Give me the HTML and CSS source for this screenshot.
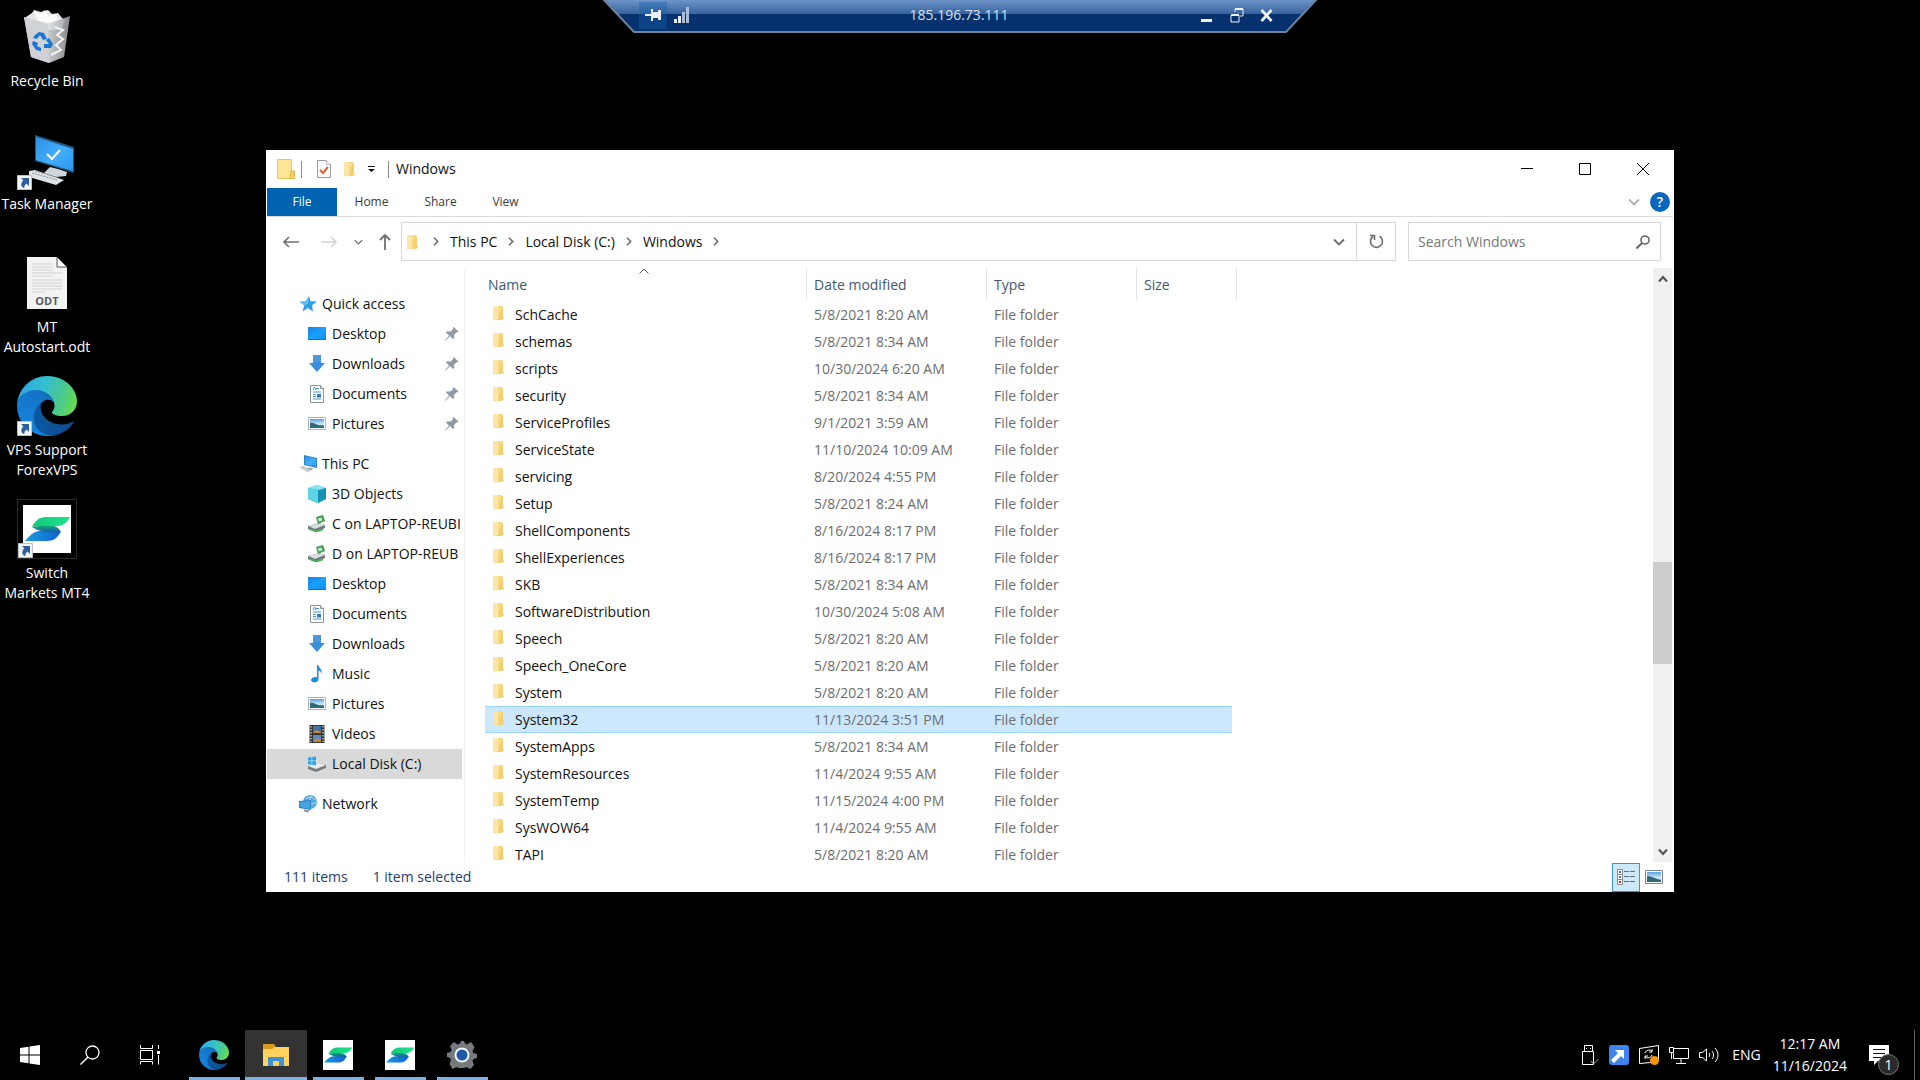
FILE: index.html
```html
<!DOCTYPE html>
<html lang="en">
<head>
<meta charset="utf-8">
<meta name="viewport" content="width=device-width, initial-scale=1">
<title>Remote desktop - 185.196.73.111</title>
<link rel="stylesheet" href="styles.css">
</head>
<body>
<svg class="defs" aria-hidden="true">
  <defs>
    <linearGradient id="gFolder" x1="0" y1="0" x2="1" y2="1"><stop offset="0" stop-color="#fbe297"/><stop offset="1" stop-color="#f3c85c"/></linearGradient>
    <linearGradient id="gScreen" x1="0" y1="0" x2="1" y2="1"><stop offset="0" stop-color="#2a8fe4"/><stop offset=".55" stop-color="#42b0fb"/><stop offset="1" stop-color="#2a93ea"/></linearGradient>
    <linearGradient id="gDesk" x1="0" y1="0" x2="1" y2="1"><stop offset="0" stop-color="#0f83e6"/><stop offset=".5" stop-color="#1ba0ff"/><stop offset="1" stop-color="#0c8cf0"/></linearGradient>
    <linearGradient id="gEdgeA" x1="63" y1="177" x2="241" y2="177" gradientUnits="userSpaceOnUse"><stop offset="0" stop-color="#0c59a4"/><stop offset="1" stop-color="#114a8b"/></linearGradient>
    <linearGradient id="gEdgeB" x1="150" y1="90" x2="45" y2="220" gradientUnits="userSpaceOnUse"><stop offset="0" stop-color="#1470bd"/><stop offset=".4" stop-color="#1478cc"/><stop offset="1" stop-color="#1583dc"/></linearGradient>
    <linearGradient id="gEdgeC" x1="10" y1="60" x2="240" y2="140" gradientUnits="userSpaceOnUse"><stop offset="0" stop-color="#2fa9e4"/><stop offset=".4" stop-color="#34bfd0"/><stop offset=".75" stop-color="#4cc98a"/><stop offset="1" stop-color="#66db50"/></linearGradient>
    <linearGradient id="gSwA" x1="0" y1="0" x2="1" y2="0"><stop offset="0" stop-color="#10c878"/><stop offset="1" stop-color="#1de58c"/></linearGradient>
    <linearGradient id="gSwB" x1="0" y1="0" x2="1" y2="0"><stop offset="0" stop-color="#1c9ae0"/><stop offset="1" stop-color="#0f62cf"/></linearGradient>
    <linearGradient id="gSwC" x1="0" y1="0" x2="0" y2="1"><stop offset="0" stop-color="#10a37c"/><stop offset="1" stop-color="#125fae"/></linearGradient>
    <linearGradient id="gPic" x1="0" y1="0" x2="0" y2="1"><stop offset="0" stop-color="#5b9fe0"/><stop offset=".55" stop-color="#cfe7f5"/><stop offset="1" stop-color="#8fc3dc"/></linearGradient>
    <linearGradient id="gBin" x1="0" y1="0" x2="1" y2="0"><stop offset="0" stop-color="#c9ccd0"/><stop offset=".5" stop-color="#e2e4e6"/><stop offset="1" stop-color="#94989d"/></linearGradient>
  </defs>
  <symbol id="folder" viewBox="0 0 11 16"><path d="M0 1h8l2 1v9l1 3-3 1H0z" fill="#f3cf74"/><path d="M0 1h5.500v12.500L3 16 0 14z" fill="#fbe6a6"/><path d="M5.500 1.500 9 2v9H5.500z" fill="url(#gFolder)"/></symbol>
  <symbol id="chev-r" viewBox="0 0 6 9"><path d="M1 .8 4.700 4.500 1 8.200" fill="none" stroke="#6d6d6d" stroke-width="1.600"/></symbol>
  <symbol id="chev-d" viewBox="0 0 12 8"><path d="M1 1.500 6 6.500 11 1.500" fill="none" stroke="currentColor" stroke-width="1.800"/></symbol>
  <symbol id="star" viewBox="0 0 18 18"><path d="m10 1 1.500 5.200 6.500.3-5 3.800 1 6.200L8.800 13 3.500 16.500l1.800-6.200L.5 6.800l6.200-.6z" fill="#2f9ee8"/><path d="M10 1 6.700 6.200.5 6.800l4.800 3.500L9 9z" fill="#5fc0f6"/></symbol>
  <symbol id="desk" viewBox="0 0 18 18"><path d="M0 2h18v13H0z" fill="url(#gDesk)"/><path d="M0 14h18v1H0z" fill="#1672c4"/></symbol>
  <symbol id="down" viewBox="0 0 18 18"><path d="M5 0h8v8h4L9 17 1 8h4z" fill="#3a8fdc"/><path d="M5 0h8v7H5z" fill="#4c97da"/></symbol>
  <symbol id="doc" viewBox="0 0 18 18"><path d="M2.500.5h10l3 3v14h-13z" fill="#fff" stroke="#8a949c"/><path d="M12.500.5v3h3" fill="#dfe4e8" stroke="#8a949c"/><path d="M5 5 6.500 2 8 5M8 3.500h3M5 7h8M5 9.500h3M5 11.500h3M5 14h8" fill="none" stroke="#4796d0"/><path d="M9 9h4v3.500H9z" fill="#3a77b0"/></symbol>
  <symbol id="pic" viewBox="0 0 18 18"><path d="M.5 2.500h17v12H.5z" fill="#fff" stroke="#a9b4bd"/><path d="M2 4h14v9H2z" fill="url(#gPic)"/><path d="M2 8c3-1 5 1 8 2l6 .5V13H2z" fill="#2f6a7d"/></symbol>
  <symbol id="pc" viewBox="0 0 18 18"><path d="m5 0 13 3v10L5 10z" fill="#2b7fc4"/><path d="m5.800 1 11.400 2.700v8.200L5.800 9.300z" fill="url(#gScreen)"/><path d="m0 12.500 4-1.500 9 4-4 2z" fill="#c3c9ce"/><path d="m9 12.500 5 .8-1 1.700-4-1z" fill="#9aa2a9"/></symbol>
  <symbol id="cube" viewBox="0 0 18 18"><path d="m0 3 9-3 9 3v11l-9 4-9-4z" fill="#32b9d6"/><path d="m0 3 9-3 9 3-7 2z" fill="#8ce4f2"/><path d="m0 3 10 2.500V18L0 14z" fill="#5fd3e7"/><path d="m10 5.500 8-2.500v11l-8 4z" fill="#1593b3"/></symbol>
  <symbol id="netdrive" viewBox="0 0 18 18"><path d="m0 11 11-3 6 2v3l-10 4-7-3z" fill="#70777a"/><path d="m0 11 11-3 6 2-10 4z" fill="#d7dbdd"/><path d="m8 2 7-2 2 6-7 3z" fill="#3d9a55"/><path d="m9.500 3.500 4-1 1 3-3.500 1z" fill="#c6ebcd"/><path d="m1 14 8 2.500 6-2" fill="none" stroke="#44b354" stroke-width="1.500"/></symbol>
  <symbol id="music" viewBox="0 0 18 18"><path d="M9 0h1.500c0 3 4 4 3.500 9-1-3-2.500-3.500-3.500-3.500V14c0 2-2 3.500-4 3.500S3 16.500 3 15s2-3 4-3c1 0 1.500 0 2 .3z" fill="#1e8ce0"/></symbol>
  <symbol id="video" viewBox="0 0 18 18"><path d="M1.500 0h15v18h-15z" fill="#343434"/><path d="M5 1h8v7H5z" fill="#4573a8"/><path d="M5 10h8v7H5z" fill="#568bc5"/><path d="m5 8 3-3 5 2v1zM5 17l4-4 4 2v2z" fill="#c88b34"/><path d="M3 1v16M15 1v16" stroke="#fff" stroke-dasharray="1.500 1.500"/></symbol>
  <symbol id="disk" viewBox="0 0 18 18"><path d="m0 11 10-3 8 2v3l-10 4-8-3z" fill="#777d82"/><path d="m0 11 10-3 8 2-10 4z" fill="#e8eaec"/><path d="M0 2.500 3.500 2v3.500H0zM4.200 2 8 1.500v4H4.200zM0 6.200h3.500v3.500L0 9zM4.200 6.200H8v4l-3.800-.5z" fill="#1fa8ee"/></symbol>
  <symbol id="net" viewBox="0 0 18 18"><circle cx="11" cy="7" r="7" fill="#5aa9da"/><path d="M7 4c3-3 7-2 9 1M7 9c4 1 8 0 10-2M12 1c-2 4-2 8 0 12" fill="none" stroke="#b8e1f5"/><path d="m0 6 12-1v10L0 13z" fill="#2b7fc4"/><path d="m1 7 10-1v8L1 12z" fill="#45a3e4"/><path d="m5 14.500 6 1-2 2-4-1z" fill="#8b959d"/></symbol>
  <symbol id="pin" viewBox="0 0 14 14"><path d="m8.500 0 5 4.500-1 1-1-.3L9 8l.3 3-1.300 1-3-3L.8 13.500 0 14l.5-1.200L4 8.500l-3-3 1-1.200 3.500.3L8.200 2 7.700.8z" fill="#8f9aa5"/></symbol>
  <symbol id="edge" viewBox="0 0 256 256"><path d="M235.680 195.460a93.730 93.730 0 0 1-10.540 4.710 101.870 101.870 0 0 1-35.900 6.460c-47.320 0-88.540-32.550-88.540-74.320a31.480 31.480 0 0 1 16.430-27.360c-42.800 1.800-53.800 46.400-53.800 72.530 0 73.880 68.090 77.500 82.760 77.500 7.910 0 19.840-2.300 27-4.560l1.310-.44a128.340 128.340 0 0 0 66.600-48.930 4 4 0 0 0-5.320-5.590z" fill="url(#gEdgeA)"/><path d="M105.730 241.530a79.200 79.200 0 0 1-22.740-21.340 80.720 80.720 0 0 1 34.140-115.240c3.120-1.470 8.450-4.130 15.540-4a32.350 32.350 0 0 1 25.690 13 31.880 31.880 0 0 1 6.360 18.660c0-.21 24.460-79.600-80-79.600-43.900 0-84.720 36.660-84.720 73.210a130.150 130.150 0 0 0 12.110 56 128 128 0 0 0 156.380 67.110 75.550 75.550 0 0 1-62.760-7.800z" fill="url(#gEdgeB)"/><path d="M152.290 148.860c-.81 1.050-3.300 2.500-3.300 5.660 0 2.610 1.700 5.120 4.720 7.230 14.380 10 41.490 8.680 41.560 8.680a59.560 59.560 0 0 0 30.270-8.350 61.380 61.380 0 0 0 30.430-52.880c.26-22.410-8-37.310-11.340-43.910C223.460 23.840 177.720 0 128 0A128 128 0 0 0 0 126.200c.48-36.540 36.800-66.050 80-66.050 3.500 0 23.460.34 42 10.070 16.340 8.580 24.900 18.940 30.850 29.210 6.180 10.670 7.280 24.150 7.280 29.520s-2.740 13.330-7.840 19.910z" fill="url(#gEdgeC)"/></symbol>
  <symbol id="switch" viewBox="0 0 48 48"><path d="M0 0h48v48H0z" fill="#fff"/><path d="M9 22c3-6 7-10 14-10h24c-3 6-7 9-14 9H17c-4 0-5 0-8 1z" fill="url(#gSwA)"/><path d="M2 36c4-5 8-9 14-10h22c-3 7-8 10-14 10z" fill="url(#gSwB)"/><path d="M9 22c5-1.500 13-1 22-1 3 1 5 2.500 7 6-5 1-14 .5-20-1-3-1-6-2-9-4z" fill="url(#gSwC)"/></symbol>
  <symbol id="shortcut" viewBox="0 0 15 15"><path d="M.5.5h14v14H.5z" fill="#f4f7fa" stroke="#b8c0c8"/><path d="M4 3h8v8L9.500 8.500C7.500 10 7 11.500 7.500 13 4 12.500 3 9 6.300 5.300z" fill="#2b5f9f"/></symbol>
</svg>

<main class="desktop">
  <ul class="icons">
    <li><a href="#bin"><span class="pic"><svg width="60" height="60" viewBox="0 0 60 60"><path d="m9 10 6-4 2-3 7 2 7-2 4 4 6-1 4 5 3 2-4 10H13z" fill="#e6e7e9"/><path d="m17 4 6 3 5-4 3 6 7-2 4 5-9 4-12-2z" fill="#fbfbfb"/><path d="m7 10 24 7 22-8-6 41-15 6-18-6z" fill="url(#gBin)" opacity=".9"/><path d="m7 10 24 7 1 39-18-6z" fill="#d0d2d5"/><path d="m38 20 8 3-6 5 6 4-7 6 5 5-10 5" fill="none" stroke="#f3f3f3" stroke-width="2"/><g fill="#1a74d4"><path d="m19 26 4-3 5 1 3 6-4 1-3-5-3 4-4-1z" transform="translate(-1 2)"/><path d="m32 31 4 6-2 4h-7v-4h5l-3-4z"/><path d="m16 34 5 2-1 3 4 2v3l-5-1-4-6z"/></g></svg></span>Recycle Bin</a></li>
    <li><a href="#task"><span class="pic"><svg width="60" height="60" viewBox="0 0 60 60"><path d="m18 5 39 12v26L18 31z" fill="#245a84"/><path d="m19 7 37 12v22L19 30z" fill="url(#gScreen)"/><path d="m30 24 5 5 8-9" fill="none" stroke="#fff" stroke-width="2"/><path d="m33 37 8 2 9 3-1 4-10 1-12-4z" fill="#cfd6dc"/><path d="m12 41 6-1 29 10-8 5-27-8z" fill="#dfe3e6"/><path d="m15 43 25 7M18 41l24 7" stroke="#8a9299" stroke-dasharray="2 1"/></svg><svg class="badge" width="15" height="15"><use href="#shortcut"/></svg></span>Task Manager</a></li>
    <li><a href="#odt"><span class="pic"><svg width="60" height="60" viewBox="0 0 60 60"><path d="M10 4h30l10 10v42H10z" fill="#f3f3f3"/><path d="M40 4v10h10z" fill="#fff" stroke="#555"/><path d="M15 11h21M15 14h21M15 17h21M15 20h30M15 23h20M15 27h30M15 30h30M15 33h30M15 36h30M15 39h13" stroke="#d2d2d2"/><text class="odt" x="30" y="52" text-anchor="middle">ODT</text></svg></span>MT Autostart.odt</a></li>
    <li><a href="#vps"><span class="pic"><svg width="60" height="60"><use href="#edge"/></svg><svg class="badge" width="15" height="15"><use href="#shortcut"/></svg></span>VPS Support ForexVPS</a></li>
    <li><a href="#mt4"><span class="pic framed"><svg width="48" height="48"><use href="#switch"/></svg><svg class="badge" width="15" height="15"><use href="#shortcut"/></svg></span>Switch Markets MT4</a></li>
  </ul>

  <header class="rdp">
    <svg class="rdp-shape" viewBox="0 0 714 33" preserveAspectRatio="none" aria-hidden="true"><defs><linearGradient id="gRdp" x1="0" y1="0" x2="0" y2="1"><stop offset="0" stop-color="#7298cc"/><stop offset=".45" stop-color="#36629d"/><stop offset=".46" stop-color="#07316d"/><stop offset="1" stop-color="#063270"/></linearGradient></defs><path d="M0-1h714l-31 33H31z" fill="url(#gRdp)" stroke="#71819c" stroke-width="2"/></svg>
    <div class="rdp-side">
      <button class="rdp-pin" aria-label="Pin"><svg width="17" height="14" viewBox="0 0 17 14"><path d="M0 6h6v2H0zM6 1h2v12H6zM8 4h5v6H8zM13 2h3v10h-3z" fill="#e9eff8"/></svg></button>
      <button aria-label="Connection quality"><svg width="16" height="16" viewBox="0 0 16 16"><path d="M0 12h3v4H0zM4 9h3v7H4z" fill="#e9eff8"/><path d="M8 5h3v11H8zM12 0h3v16h-3z" fill="#a9bedb"/></svg></button>
    </div>
    <span>185.196.73.111</span>
    <div class="rdp-side end">
      <button aria-label="Minimize"><svg width="14" height="14" viewBox="0 0 14 14"><path d="M1 11h11v3H1z" fill="#eef3fa"/></svg></button>
      <button aria-label="Restore"><svg width="14" height="15" viewBox="0 0 14 15"><path d="M5 4V1h8v7h-3M1 7h8v7H1z" fill="none" stroke="#eef3fa"/><path d="M5 1h8M1 7h8" stroke="#eef3fa" stroke-width="2"/></svg></button>
      <button aria-label="Close"><svg width="13" height="13" viewBox="0 0 13 13"><path d="m1.500 1 10 11m0-11-10 11" stroke="#eef3fa" stroke-width="2.800"/></svg></button>
    </div>
  </header>

  <section class="window" aria-label="Windows">
    <div class="titlebar">
      <div class="quick">
        <svg width="18" height="20" viewBox="0 0 18 20"><path d="M.5.5h14v19H.5z" fill="#ffe596" stroke="#e9c65a"/><path d="M14 12h3.500v7.500H13z" fill="#f5d169" stroke="#dcb548"/></svg>
        <i class="bar"></i>
        <button aria-label="Properties"><svg width="14" height="18" viewBox="0 0 14 18"><path d="M.5.5h9l4 4v13H.5z" fill="#fafafa" stroke="#9b9ba6"/><path d="M9.500.5v4h4" fill="#fff" stroke="#b5b5c0"/><path d="m3 10 3 3 5-6" fill="none" stroke="#e8622c" stroke-width="2"/></svg></button>
        <button aria-label="New folder"><svg width="11" height="16"><use href="#folder"/></svg></button>
        <button aria-label="Customize"><svg width="7" height="6" viewBox="0 0 7 6"><path d="M0 0h7v1H0zM0 3h7L3.500 6z" fill="#111"/></svg></button>
        <i class="bar"></i>
      </div>
      <h1>Windows</h1>
      <div class="controls">
        <button aria-label="Minimize"><svg width="12" height="12"><path d="M0 5.500h12" stroke="#000"/></svg></button>
        <button aria-label="Maximize"><svg width="12" height="12"><path d="M.5.5h11v11H.5z" fill="none" stroke="#000"/></svg></button>
        <button aria-label="Close"><svg width="12" height="12"><path d="m0 0 12 12M12 0 0 12" stroke="#000"/></svg></button>
      </div>
    </div>
    <nav class="tabs">
      <button class="file">File</button><button>Home</button><button>Share</button><button>View</button>
      <div class="tabs-end">
        <button class="expand" aria-label="Expand ribbon"><svg width="12" height="8"><use href="#chev-d"/></svg></button>
        <button class="help" aria-label="Help">?</button>
      </div>
    </nav>
    <div class="address-row">
      <div class="history">
        <button aria-label="Back"><svg width="16" height="12" viewBox="0 0 16 12"><path d="M6 1 1 6l5 5M1 6h15" fill="none" stroke="#6f6f6f" stroke-width="1.600"/></svg></button>
        <button aria-label="Forward"><svg width="16" height="12" viewBox="0 0 16 12"><path d="m10 1 5 5-5 5M15 6H0" fill="none" stroke="#d4d4d4" stroke-width="1.600"/></svg></button>
        <button aria-label="Recent" class="recent"><svg width="9" height="6"><use href="#chev-d"/></svg></button>
        <button aria-label="Up"><svg width="12" height="16" viewBox="0 0 12 16"><path d="m1 6 5-5 5 5M6 1v15" fill="none" stroke="#6f6f6f" stroke-width="1.800"/></svg></button>
      </div>
      <div class="address">
        <svg width="11" height="16"><use href="#folder"/></svg>
        <svg width="6" height="9"><use href="#chev-r"/></svg><a href="#pc">This PC</a>
        <svg width="6" height="9"><use href="#chev-r"/></svg><a href="#c">Local Disk (C:)</a>
        <svg width="6" height="9"><use href="#chev-r"/></svg><a href="#windows">Windows</a>
        <svg width="6" height="9"><use href="#chev-r"/></svg>
        <button class="drop" aria-label="Previous locations"><svg width="12" height="8"><use href="#chev-d"/></svg></button>
        <button class="refresh" aria-label="Refresh"><svg width="15" height="15" viewBox="0 0 15 15"><path d="M10.500 2.200A6 6 0 1 1 4 2.500M1 1.500h4.500v4.500" fill="none" stroke="#6f6f6f" stroke-width="1.600"/></svg></button>
      </div>
      <label class="search"><input type="search" placeholder="Search Windows" aria-label="Search Windows"><svg width="14" height="14" viewBox="0 0 14 14"><circle cx="9" cy="5" r="4" fill="none" stroke="#666" stroke-width="1.600"/><path d="m6 8-5.500 5.500" stroke="#666" stroke-width="2"/></svg></label>
    </div>
    <div class="content">
      <nav class="tree">
        <div class="group">
          <a href="#q" class="top"><svg><use href="#star"/></svg>Quick access</a>
          <a href="#q1"><svg><use href="#desk"/></svg>Desktop<svg class="pin"><use href="#pin"/></svg></a>
          <a href="#q2"><svg><use href="#down"/></svg>Downloads<svg class="pin"><use href="#pin"/></svg></a>
          <a href="#q3"><svg><use href="#doc"/></svg>Documents<svg class="pin"><use href="#pin"/></svg></a>
          <a href="#q4"><svg><use href="#pic"/></svg>Pictures<svg class="pin"><use href="#pin"/></svg></a>
        </div>
        <div class="group">
          <a href="#pc" class="top"><svg><use href="#pc"/></svg>This PC</a>
          <a href="#p1"><svg><use href="#cube"/></svg>3D Objects</a>
          <a href="#p2"><svg><use href="#netdrive"/></svg>C on LAPTOP-REUBI</a>
          <a href="#p3"><svg><use href="#netdrive"/></svg>D on LAPTOP-REUB</a>
          <a href="#p4"><svg><use href="#desk"/></svg>Desktop</a>
          <a href="#p5"><svg><use href="#doc"/></svg>Documents</a>
          <a href="#p6"><svg><use href="#down"/></svg>Downloads</a>
          <a href="#p7"><svg><use href="#music"/></svg>Music</a>
          <a href="#p8"><svg><use href="#pic"/></svg>Pictures</a>
          <a href="#p9"><svg><use href="#video"/></svg>Videos</a>
          <a href="#c" class="current"><svg><use href="#disk"/></svg>Local Disk (C:)</a>
        </div>
        <div class="group">
          <a href="#n" class="top"><svg><use href="#net"/></svg>Network</a>
        </div>
      </nav>
      <div class="files">
        <table>
          <colgroup><col class="c-name"><col class="c-date"><col class="c-type"><col class="c-size"></colgroup>
          <thead><tr><th>Name<svg class="sort" width="10" height="6" viewBox="0 0 10 6"><path d="m.5 5.500 4.500-4.500 4.500 4.500" fill="none" stroke="#555"/></svg></th><th>Date modified</th><th>Type</th><th>Size</th></tr></thead>
          <tbody>
            <tr><td><svg><use href="#folder"/></svg>SchCache</td><td>5/8/2021 8:20 AM</td><td>File folder</td><td></td></tr>
            <tr><td><svg><use href="#folder"/></svg>schemas</td><td>5/8/2021 8:34 AM</td><td>File folder</td><td></td></tr>
            <tr><td><svg><use href="#folder"/></svg>scripts</td><td>10/30/2024 6:20 AM</td><td>File folder</td><td></td></tr>
            <tr><td><svg><use href="#folder"/></svg>security</td><td>5/8/2021 8:34 AM</td><td>File folder</td><td></td></tr>
            <tr><td><svg><use href="#folder"/></svg>ServiceProfiles</td><td>9/1/2021 3:59 AM</td><td>File folder</td><td></td></tr>
            <tr><td><svg><use href="#folder"/></svg>ServiceState</td><td>11/10/2024 10:09 AM</td><td>File folder</td><td></td></tr>
            <tr><td><svg><use href="#folder"/></svg>servicing</td><td>8/20/2024 4:55 PM</td><td>File folder</td><td></td></tr>
            <tr><td><svg><use href="#folder"/></svg>Setup</td><td>5/8/2021 8:24 AM</td><td>File folder</td><td></td></tr>
            <tr><td><svg><use href="#folder"/></svg>ShellComponents</td><td>8/16/2024 8:17 PM</td><td>File folder</td><td></td></tr>
            <tr><td><svg><use href="#folder"/></svg>ShellExperiences</td><td>8/16/2024 8:17 PM</td><td>File folder</td><td></td></tr>
            <tr><td><svg><use href="#folder"/></svg>SKB</td><td>5/8/2021 8:34 AM</td><td>File folder</td><td></td></tr>
            <tr><td><svg><use href="#folder"/></svg>SoftwareDistribution</td><td>10/30/2024 5:08 AM</td><td>File folder</td><td></td></tr>
            <tr><td><svg><use href="#folder"/></svg>Speech</td><td>5/8/2021 8:20 AM</td><td>File folder</td><td></td></tr>
            <tr><td><svg><use href="#folder"/></svg>Speech_OneCore</td><td>5/8/2021 8:20 AM</td><td>File folder</td><td></td></tr>
            <tr><td><svg><use href="#folder"/></svg>System</td><td>5/8/2021 8:20 AM</td><td>File folder</td><td></td></tr>
            <tr class="selected"><td><svg><use href="#folder"/></svg>System32</td><td>11/13/2024 3:51 PM</td><td>File folder</td><td></td></tr>
            <tr><td><svg><use href="#folder"/></svg>SystemApps</td><td>5/8/2021 8:34 AM</td><td>File folder</td><td></td></tr>
            <tr><td><svg><use href="#folder"/></svg>SystemResources</td><td>11/4/2024 9:55 AM</td><td>File folder</td><td></td></tr>
            <tr><td><svg><use href="#folder"/></svg>SystemTemp</td><td>11/15/2024 4:00 PM</td><td>File folder</td><td></td></tr>
            <tr><td><svg><use href="#folder"/></svg>SysWOW64</td><td>11/4/2024 9:55 AM</td><td>File folder</td><td></td></tr>
            <tr><td><svg><use href="#folder"/></svg>TAPI</td><td>5/8/2021 8:20 AM</td><td>File folder</td><td></td></tr>
          </tbody>
        </table>
      </div>
      <div class="scrollbar">
        <button aria-label="Scroll up"><svg width="10" height="8" viewBox="0 0 10 8"><path d="m1 6.500 4-4.500 4 4.500" fill="none" stroke="#505050" stroke-width="2"/></svg></button>
        <div class="track"><div class="thumb"></div></div>
        <button aria-label="Scroll down"><svg width="10" height="8" viewBox="0 0 10 8"><path d="m1 1.500 4 4.500 4-4.500" fill="none" stroke="#505050" stroke-width="2"/></svg></button>
      </div>
    </div>
    <footer class="status">
      <span>111 items</span><span>1 item selected</span>
      <div class="views">
        <button class="on" aria-label="Details view"><svg width="18" height="16" viewBox="0 0 18 16"><path d="M.5.5h5v5h-5zM.5 5.500h5v5h-5zM.5 10.500h5v5h-5z" fill="#fff" stroke="#8a8a8a"/><path d="M2 2h2v2H2zM2 7h2v2H2z" fill="#4b6d86"/><path d="M2 12h2v2H2z" fill="#b0392b"/><path d="M7 2.500h5M13 2.500h5M7 7.500h5M13 7.500h5M7 12.500h5M13 12.500h5" stroke="#5b6d78"/></svg></button>
        <button aria-label="Large icons"><svg width="18" height="14" viewBox="0 0 18 14"><path d="M.5.5h17v13H.5z" fill="#fff" stroke="#7a858c"/><path d="M2 2h14v10H2z" fill="url(#gPic)"/><path d="M2 6c4 0 6 2 14 4v2H2z" fill="#2d6c77"/></svg></button>
      </div>
    </footer>
  </section>
</main>

<footer class="taskbar">
  <div class="sys">
    <button aria-label="Start"><svg width="20" height="20" viewBox="0 0 20 20"><path d="M0 3 8.500 1.700v7.800H0zM9.500 1.500 20 0v9.500H9.500zM0 10.500h8.500v7.800L0 17zM9.500 10.500H20V20L9.500 18.500z" fill="#fff"/></svg></button>
    <button aria-label="Search"><svg width="20" height="20" viewBox="0 0 20 20"><circle cx="12.500" cy="7.500" r="6.500" fill="none" stroke="#fff" stroke-width="1.300"/><path d="M8 12 .5 19.500" stroke="#fff" stroke-width="1.400"/></svg></button>
    <button aria-label="Task view"><svg width="20" height="20" viewBox="0 0 20 20"><path d="M.5 0v3.500h12V0M.5 5.500h12v9H.5zM.5 19.500v-3h12v3M18.500 0v4M18.500 10v9.500" fill="none" stroke="#fff"/><path d="M17 6h3v3h-3z" fill="#fff"/></svg></button>
  </div>
  <div class="apps">
    <button aria-label="Edge"><svg width="30" height="30"><use href="#edge"/></svg></button>
    <button class="active" aria-label="File Explorer"><svg width="28" height="24" viewBox="0 0 28 24"><path d="M1 1h11l2 3h13v19H1z" fill="#d89b20"/><path d="M1 6h9l3-2h14v19H1z" fill="#fdd25e"/><path d="M6 23V14h16v9h-5v-5h-6v5z" fill="#3d91d8"/></svg></button>
    <button aria-label="Switch Markets"><svg width="30" height="30"><use href="#switch"/></svg></button>
    <button aria-label="Switch Markets MT4"><svg width="30" height="30"><use href="#switch"/></svg></button>
    <button aria-label="Settings"><svg width="30" height="30" viewBox="0 0 30 30"><path d="m7 2 3.500 2.500L13 3.500 14 1h3l1 2.500 2 1L24 2l3.500 5-2 4 .8 2 3.700 1v4l-3.500 1-1 2 1.500 4-3.500 4-4-2-2.500 1H12l-2.500-1-4 2L2.500 24 4 20l-.8-2L0 17v-4l3.500-1 1-2L3 6z" fill="#777a7d"/><circle cx="15" cy="15" r="7.500" fill="#f4f7fa"/><circle cx="15" cy="15" r="5.500" fill="#1c58a8"/></svg></button>
  </div>
  <div class="tray">
    <button aria-label="USB"><svg width="20" height="20" viewBox="0 0 20 20"><path d="M5.500 6.500v-6h8v6M3.500 6.500h11v13h-11zM7 3.500h1M11 3.500h1" fill="none" stroke="#fff"/><path d="m12 16 2.500 3 5-5" fill="none" stroke="#aaa"/></svg></button>
    <button aria-label="Remote"><svg width="20" height="20" viewBox="0 0 20 20"><rect width="20" height="20" rx="3" fill="#3f83ee"/><path d="M6 5h9v9l-3-3-7 7-3-3 7-7z" fill="#fff"/></svg></button>
    <button aria-label="Updates"><svg width="20" height="20" viewBox="0 0 20 20"><path d="M.5 3.500 19.500.5v14M12 17.500.5 18.500v-15" fill="none" stroke="#fff"/><path d="M6 8c1-3 5-4 7-1.500M13 4v3h-3M13 10c-1 3-5 4-7 1.500M6 14v-3h3" fill="none" stroke="#fff"/><circle cx="15.500" cy="15.500" r="4.500" fill="#f8970c"/></svg></button>
    <button aria-label="Network"><svg width="20" height="20" viewBox="0 0 20 20"><path d="M5 3.500h14.500v10h-15V8M.5 2.500h4v5h-4zM2.500 8v6M12 14v4M7 18.500h10" fill="none" stroke="#fff"/></svg></button>
    <button aria-label="Volume"><svg width="20" height="20" viewBox="0 0 20 20"><path d="M.5 7.500h3L7.500 4v12l-4-3.500h-3z" fill="none" stroke="#fff"/><path d="M10 8c1 1 1 3 0 4M13 6c2 2 2 6 0 8M16 3c4 4 4 10 0 14" fill="none" stroke="#fff"/></svg></button>
    <button class="lang">ENG</button>
    <button class="clock"><span>12:17 AM</span><span>11/16/2024</span></button>
    <button class="notify" aria-label="Notifications"><svg width="20" height="20" viewBox="0 0 20 20"><path d="M0 0h20v16H9l-4 4v-4H0z" fill="#fff"/><path d="M4 4.500h12M4 8.500h12M4 12.500h8" stroke="#111"/></svg><span class="count">1</span></button>
    <i class="peek"></i>
  </div>
</footer>
</body>
</html>
```
FILE: styles.css
```css
* { box-sizing: border-box; }
body {
  margin: 0;
  min-height: 100vh;
  display: flex;
  flex-direction: column;
  background: #000;
  color: #111;
  font: 14px/20px "Open Sans", "Noto Sans", sans-serif;
}
button {
  margin: 0; padding: 0; border: 0;
  background: none; color: inherit; font: inherit;
  display: flex; align-items: center; justify-content: center;
}
a { color: inherit; text-decoration: none; }
svg { display: block; flex: none; }
.defs { position: absolute; width: 0; height: 0; }

.desktop { flex: 1; position: relative; }

/* desktop shortcuts */
.icons { list-style: none; margin: 0; padding: 0; width: 94px; }
.icons li { height: 123px; padding-top: 7px; color: #fff; text-align: center; }
.icons a { display: block; }
.pic { position: relative; display: grid; place-items: center; width: 60px; height: 60px; margin: 0 auto 4px; }
.framed { border: 1px solid #2a2a2a; }
.badge { position: absolute; left: 0; bottom: 0; }
.odt { font: bold 11px "Open Sans", sans-serif; fill: #5a5a5a; }

/* remote session bar */
.rdp {
  position: absolute; top: 0; left: 50%;
  width: 714px; height: 33px; margin-left: -357px;
  padding: 0 44px 3px 36px;
  display: flex; align-items: center; justify-content: space-between;
  color: #d5e0f0;
}
.rdp-shape { position: absolute; left: 0; top: 0; width: 100%; height: 100%; }
.rdp-side { position: relative; display: flex; align-items: center; gap: 7px; width: 267px; }
.rdp-side.end { justify-content: flex-end; gap: 16px; }
.rdp > span { position: relative; flex: 1; padding-left: 6px; text-align: center; }
.rdp-pin { width: 28px; height: 27px; background: rgba(20, 95, 170, .4); }

/* explorer window */
.window {
  position: absolute; left: 266px; right: 246px; top: 150px;
  background: #fff; padding: 0 1px;
}
.titlebar { display: flex; align-items: center; height: 38px; padding-left: 10px; }
.quick { display: flex; align-items: center; gap: 13px; }
.quick > :first-child { margin-right: -7px; }
.quick > :nth-child(2) { margin-right: 2px; }
.bar { width: 1px; height: 17px; background: #8a8a8a; }
h1 { margin: 0 0 0 7px; font-size: 14px; line-height: 22px; font-weight: 400; }
.controls { display: flex; margin-left: auto; padding-right: 1px; }
.controls button { width: 58px; height: 38px; }

.tabs { display: flex; height: 29px; border-bottom: 1px solid #dadbdc; font-size: 12px; color: #3b3b3b; }
.tabs > button { width: 69px; }
.tabs > button:nth-child(4) { width: 61px; }
.tabs > .file { width: 70px; background: #0063b1; color: #fff; }
.tabs-end { display: flex; align-items: center; gap: 10px; margin-left: auto; padding-right: 3px; }
.expand { color: #b0b0b0; }
.help { width: 20px; height: 20px; border-radius: 50%; background: #0b66bd; color: #fff; font-size: 14px; font-weight: 600; }

.address-row { display: flex; padding: 5px 12px 7px 16px; }
.history { display: flex; align-items: center; justify-content: space-between; width: 108px; margin-right: 10px; color: #6f6f6f; }
.history button:nth-child(2) { margin-right: 2px; }
.history button:nth-child(1) { margin-right: 6px; }
.address { flex: 1; display: flex; align-items: center; gap: 11px; height: 39px; padding-left: 5px; border: 1px solid #d9d9d9; }
.address > :nth-child(1) { margin-right: 4px; }
.drop { margin: 0 0 0 auto; color: #6a6a6a; }
.refresh { width: 39px; height: 37px; border-left: 1px solid #d9d9d9; }
.search { display: flex; align-items: center; width: 253px; height: 39px; margin-left: 12px; padding: 0 10px 0 9px; border: 1px solid #d9d9d9; }
.search input { flex: 1; min-width: 0; border: 0; padding: 0; outline: 0; font: inherit; background: none; }
.search input::placeholder { color: #767676; opacity: 1; }

.content { display: flex; height: 594px; }
.tree { width: 198px; flex: none; padding: 21px 2px 0 0; border-right: 1px solid #f1f1f1; overflow: hidden; }
.group { margin-bottom: 10px; }
.tree a { display: flex; align-items: center; gap: 6px; height: 30px; padding-left: 41px; white-space: nowrap; overflow: hidden; }
.tree .top { padding-left: 32px; gap: 5px; }
.tree svg { width: 18px; height: 18px; }
.tree .pin { width: 14px; height: 14px; margin: 0 3px 0 auto; }
.tree .current { background: #d9d9d9; }

.files { flex: 1; min-width: 0; overflow: hidden; padding-left: 20px; }
table { width: 747px; table-layout: fixed; border-collapse: separate; border-spacing: 0; }
.c-name { width: 322px; } .c-date { width: 180px; } .c-type { width: 150px; } .c-size { width: 95px; }
th { position: relative; height: 33px; padding: 0 0 0 7px; text-align: left; font-weight: 400; color: #44586f; }
th:first-child { padding-left: 3px; }
th::after { content: ""; position: absolute; right: 0; top: 0; height: 32px; border-right: 1px solid #e2e6ea; }
th:last-child::after { right: -5px; }
.sort { position: absolute; left: 154px; top: 0; }
td { height: 27px; padding: 0 0 0 7px; color: #6d6d6d; white-space: nowrap; }
td:first-child { display: flex; align-items: center; gap: 11px; padding-left: 8px; color: #111; }
td svg { width: 11px; height: 16px; margin-bottom: 3px; }
.selected td { background: #cce8ff; box-shadow: inset 0 1px #99d1ff, inset 0 -1px #99d1ff; }

.scrollbar { display: flex; flex-direction: column; width: 19px; margin-right: 1px; background: #f0f0f0; }
.scrollbar button { height: 21px; }
.track { flex: 1; padding-top: 273px; }
.thumb { height: 102px; background: #cdcdcd; }

.status { display: flex; align-items: center; height: 30px; padding-left: 17px; color: #27406a; }
.status span { margin-right: 25px; }
.views { display: flex; margin-left: auto; padding-right: 5px; }
.views button { width: 28px; height: 29px; }
.views .on { background: #cde8f8; border: 1px solid #3c94cf; }

/* taskbar */
.taskbar { display: flex; height: 50px; color: #fff; }
.sys, .apps, .tray { display: flex; }
.sys button { width: 60px; }
.apps { padding-left: 3px; }
.apps button { position: relative; width: 62px; }
.apps button::after { content: ""; position: absolute; left: 6px; right: 5px; bottom: 0; height: 3px; background: #7fb0e2; }
.apps .active { background: #333; }
.apps .active::after { left: 0; right: 0; }
.tray { align-items: center; gap: 10px; margin-left: auto; padding-right: 5px; }
.lang { margin-left: 3px; }
.clock { flex-direction: column; line-height: 22px; margin-left: 2px; }
.notify { position: relative; width: 44px; height: 50px; margin-right: 3px; }
.count {
  position: absolute; left: 21px; top: 24px;
  width: 21px; height: 21px; border: 1px solid #777; border-radius: 50%;
  background: #2b2b2b; font-size: 14px; line-height: 19px;
}
.peek { width: 1px; height: 50px; background: #5a5a5a; }
```
